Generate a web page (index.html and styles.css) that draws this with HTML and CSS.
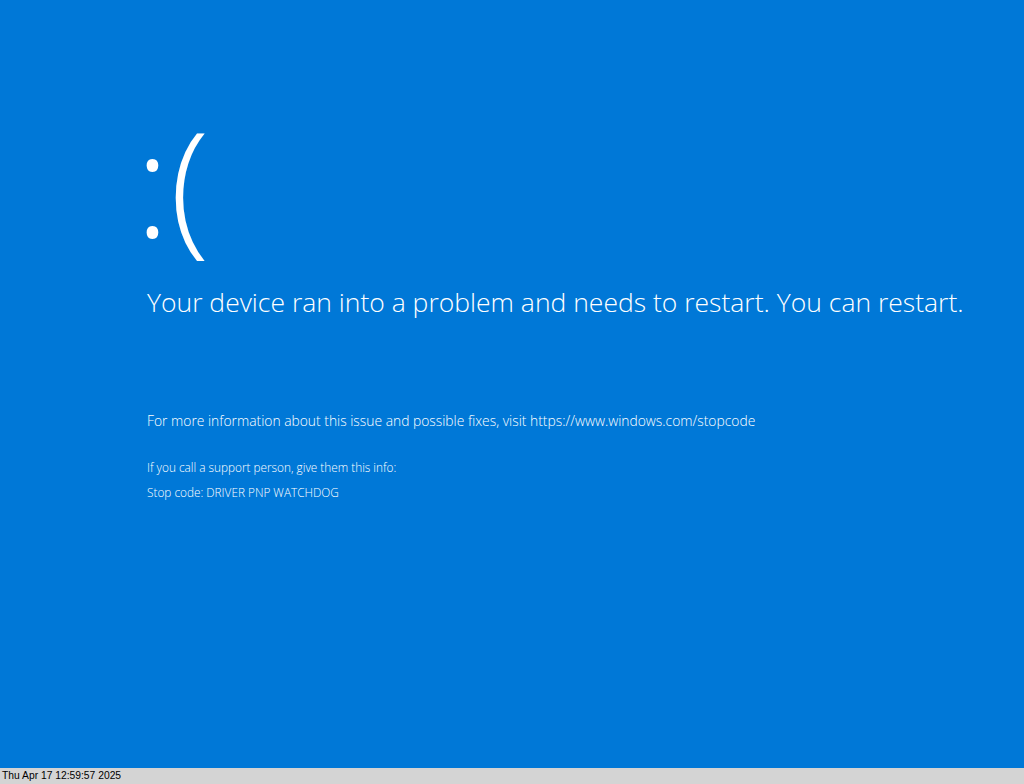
FILE: index.html
```html
<!DOCTYPE html>
<html lang="en">
<head>
<meta charset="UTF-8">
<title>Stop code</title>
<link rel="stylesheet" href="styles.css">
</head>
<body>

<div class="bsod">
  <div class="content">
    <div class="face">:(</div>
    <p class="headline">Your device ran into a problem and needs to restart. You can restart.</p>
    <p class="info">For more information about this issue and possible fixes, visit https://www.windows.com/stopcode</p>
    <p class="support">If you call a support person, give them this info:</p>
    <p class="stopcode">Stop code: DRIVER PNP WATCHDOG</p>
  </div>
</div>

<div class="statusbar">Thu Apr 17 12:59:57 2025</div>

</body>
</html>
```

FILE: styles.css
```css
/* full screen stop page */
html, body {
  margin: 0;
  height: 100%;
}

body {
  display: flex;
  flex-direction: column;
  background: #d4d4d4;
  font-family: "Open Sans", "Noto Sans", sans-serif;
}

.bsod {
  flex: 1;
  background-color: #0078d7;
  color: #fff;
}

.content {
  padding: 109px 0 0 147px;
}

.face {
  font-size: 146px;
  font-weight: 300;
  line-height: 1;
  margin-left: -12px;
}

.headline {
  margin: 29px 0 0;
  font-size: 26.5px;
  font-weight: 300;
}

.info {
  margin: 91px 0 0;
  font-size: 13.85px;
  font-weight: 300;
}

.support {
  margin: 29px 0 0;
  font-size: 11.8px;
  font-weight: 300;
}

.stopcode {
  margin: 9px 0 0;
  font-size: 11.8px;
  font-weight: 300;
}

.statusbar {
  height: 16px;
  line-height: 16px;
  padding-left: 2px;
  font-family: "Liberation Sans", Arial, sans-serif;
  font-size: 10.3px;
  color: #000;
}
```
